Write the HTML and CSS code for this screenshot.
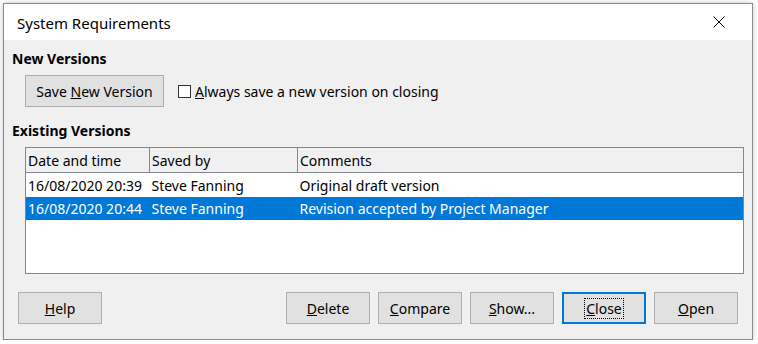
FILE: index.html
```html
<!DOCTYPE html>
<html lang="en">
<head>
  <meta charset="UTF-8">
  <title>System Requirements</title>
  <link rel="stylesheet" href="styles.css">
</head>
<body>
  <div class="window">
    <div class="titlebar">
      <span class="title">System Requirements</span>
      <svg class="close-x" width="12" height="12" viewBox="0 0 12 12">
        <path d="M0.5 0.5 L11.5 11.5 M11.5 0.5 L0.5 11.5" stroke="#000" stroke-width="1" fill="none"/>
      </svg>
    </div>

    <div class="content">
      <h3 class="label">New Versions</h3>
      <div class="new-row">
        <button class="btn wide">Save <u>N</u>ew Version</button>
        <label class="check"><span class="box"></span><u>A</u>lways save a new version on closing</label>
      </div>

      <h3 class="label second">Existing Versions</h3>
      <div class="list">
        <table>
          <thead>
            <tr>
              <th class="c1">Date and time</th>
              <th class="c2">Saved by</th>
              <th class="c3">Comments</th>
            </tr>
          </thead>
          <tbody>
            <tr>
              <td>16/08/2020 20:39</td>
              <td>Steve Fanning</td>
              <td>Original draft version</td>
            </tr>
            <tr class="selected">
              <td>16/08/2020 20:44</td>
              <td>Steve Fanning</td>
              <td>Revision accepted by Project Manager</td>
            </tr>
          </tbody>
        </table>
      </div>

      <div class="button-row">
        <button class="btn"><u>H</u>elp</button>
        <div class="right-buttons">
          <button class="btn"><u>D</u>elete</button>
          <button class="btn"><u>C</u>ompare</button>
          <button class="btn"><u>S</u>how...</button>
          <button class="btn default"><span class="focus"><u>C</u>lose</span></button>
          <button class="btn"><u>O</u>pen</button>
        </div>
      </div>
    </div>
  </div>
</body>
</html>
```

FILE: styles.css
```css
body {
  margin: 0;
  background-color: #fff;
  font-family: "Noto Sans", "Open Sans", sans-serif;
  font-size: 14px;
  color: #000;
}

.window {
  margin: 3px 0 0 3px;
  width: 748px;
  height: 335px;
  border: 1px solid #8a8a8a;
  background-color: #f0f0f0;
  box-shadow: 0 0 6px rgba(0, 0, 0, 0.22);
  display: flex;
  flex-direction: column;
}

.titlebar {
  height: 36px;
  background-color: #fff;
  display: flex;
  align-items: center;
  justify-content: space-between;
  padding: 0 27px 0 13px;
}

.title {
  font-size: 15px;
  margin-top: 1px;
}

.content {
  padding: 0 8px 0 8px;
  display: flex;
  flex-direction: column;
}

.label {
  margin: 9px 0 0 0;
  font-size: 14px;
  font-weight: bold;
  line-height: 20px;
}

.label.second {
  margin-top: 14px;
}

.new-row {
  display: flex;
  align-items: center;
  margin-top: 6px;
  padding-left: 13px;
}

.btn {
  font-family: inherit;
  font-size: 14px;
  color: #000;
  background-color: #e1e1e1;
  border: 1px solid #adadad;
  width: 84px;
  height: 32px;
  padding: 0;
  margin: 0;
}

.btn.wide {
  width: 139px;
}

.btn.default {
  border: 2px solid #0078d7;
}

.focus {
  border: 1px dotted #000;
  padding: 0 1px;
}

.check {
  display: flex;
  align-items: center;
  margin-left: 14px;
}

.box {
  width: 11px;
  height: 11px;
  border: 1px solid #333;
  background-color: #fff;
  margin-right: 4px;
}

.list {
  margin: 6px 0 0 13px;
  width: 717px;
  height: 125px;
  border: 1px solid #828790;
  background-color: #fff;
}

table {
  width: 100%;
  border-collapse: collapse;
}

th {
  background-color: #f0f0f0;
  font-weight: normal;
  text-align: left;
  height: 23px;
  padding: 1px 0 0 2px;
  border-right: 1px solid #828790;
  border-bottom: 1px solid #828790;
}

th.c3 {
  border-right: none;
}

th.c1 {
  width: 121px;
}

th.c2 {
  width: 145px;
}

td {
  height: 23px;
  padding: 0 0 0 2px;
  white-space: nowrap;
}

tbody tr:first-child td {
  padding-top: 1px;
}

tr.selected td {
  background-color: #0078d7;
  color: #fff;
}

.button-row {
  display: flex;
  justify-content: space-between;
  margin-top: 18px;
  padding: 0 6px 0 6px;
}

.right-buttons {
  display: flex;
  gap: 8px;
}
```
